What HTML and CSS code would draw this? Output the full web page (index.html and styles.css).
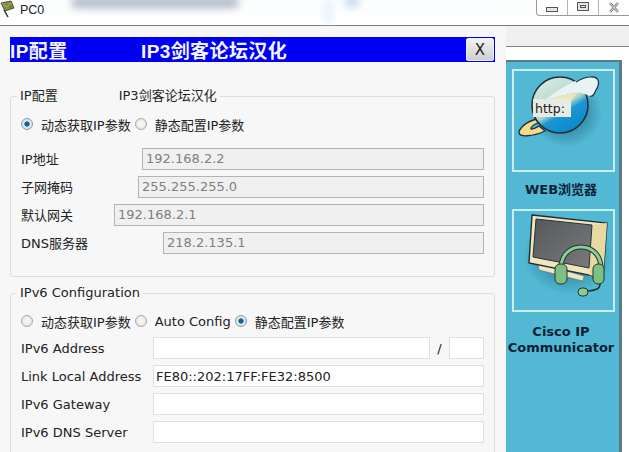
FILE: index.html
```html
<!DOCTYPE html>
<html lang="zh">
<head>
<meta charset="utf-8">
<title>PC0</title>
<link rel="stylesheet" href="styles.css">
</head>
<body>
<div class="window">
  <header class="titlebar">
    <svg class="app-icon" width="16" height="19" viewBox="0 0 16 19">
      <path d="M1 3l10-2 3 7-9 3z" fill="#7d8f4a" stroke="#4d5a2a"/>
      <path d="M2 3l5 4 6-5" fill="none" stroke="#c9a06a"/>
      <path d="M4 10l4 7" stroke="#333" stroke-width="1.5"/>
      <path d="M9 5l3 1-1 2z" fill="#c33"/>
    </svg>
    <span class="app-title">PC0</span>
    <div class="blur blur-a"></div>
    <div class="blur blur-b"></div>
    <div class="blur blur-c"></div>
    <div class="win-controls">
      <div class="win-btn"><span class="ico-min"></span></div>
      <div class="win-btn"><span class="ico-max"></span></div>
      <div class="win-btn win-close">
        <svg width="12" height="11" viewBox="0 0 12 11"><path d="M2 1l8 9M10 1l-8 9" stroke="#777" stroke-width="2.6" fill="none"/><path d="M2 1l8 9M10 1l-8 9" stroke="#eee" stroke-width="1" fill="none"/></svg>
      </div>
    </div>
  </header>
  <div class="content">
    <main class="config">
      <div class="banner">
        <span class="banner-a">IP配置</span>
        <span class="banner-b">IP3剑客论坛汉化</span>
        <button class="close-btn">X</button>
      </div>
      <fieldset class="group group-v4">
        <legend><span class="legend-a">IP配置</span><span>IP3剑客论坛汉化</span></legend>
        <div class="radios">
          <label class="radio"><input type="radio" name="v4" checked><span>动态获取IP参数</span></label>
          <label class="radio"><input type="radio" name="v4"><span>静态配置IP参数</span></label>
        </div>
        <div class="rows">
          <div class="row"><span class="lbl w-ip">IP地址</span><input class="field off" value="192.168.2.2" disabled></div>
          <div class="row"><span class="lbl w-mask">子网掩码</span><input class="field off" value="255.255.255.0" disabled></div>
          <div class="row"><span class="lbl w-gw">默认网关</span><input class="field off" value="192.168.2.1" disabled></div>
          <div class="row"><span class="lbl w-dns">DNS服务器</span><input class="field off" value="218.2.135.1" disabled></div>
        </div>
      </fieldset>
      <fieldset class="group group-v6">
        <legend>IPv6 Configuration</legend>
        <div class="radios">
          <label class="radio"><input type="radio" name="v6"><span>动态获取IP参数</span></label>
          <label class="radio"><input type="radio" name="v6"><span>Auto Config</span></label>
          <label class="radio"><input type="radio" name="v6" checked><span>静态配置IP参数</span></label>
        </div>
        <div class="rows">
          <div class="row"><span class="lbl w-v6">IPv6 Address</span><input class="field"><span class="slash">/</span><input class="field prefix"></div>
          <div class="row"><span class="lbl w-v6">Link Local Address</span><input class="field" value="FE80::202:17FF:FE32:8500"></div>
          <div class="row"><span class="lbl w-v6">IPv6 Gateway</span><input class="field"></div>
          <div class="row"><span class="lbl w-v6">IPv6 DNS Server</span><input class="field"></div>
        </div>
      </fieldset>
    </main>
    <aside class="side">
      <div class="side-top"></div>
      <div class="apps">
        <div class="app">
          <div class="app-frame">
            <svg width="99" height="99" viewBox="514 71 99 99">
              <defs>
                <radialGradient id="shadow"><stop offset="0.6" stop-color="#2f7f9c" stop-opacity=".6"/><stop offset="1" stop-color="#2f7f9c" stop-opacity="0"/></radialGradient>
                <linearGradient id="ball" x1="0.15" y1="0" x2="0.75" y2="1"><stop offset="0" stop-color="#dfeae6"/><stop offset=".55" stop-color="#a9d8c8"/><stop offset=".66" stop-color="#1a96d4"/><stop offset="1" stop-color="#0d85c9"/></linearGradient>
              </defs>
              <ellipse cx="566" cy="113" rx="36" ry="34" fill="url(#shadow)"/>
              <path d="M537 119C527 121 519 128 519 133C520 137 532 137 545 131L539 126C534 129 530 130 531 128C532 126 535 124 538 123Z" fill="#f6d98c" stroke="#1f2f3a" stroke-width="1.3"/>
              <circle cx="560" cy="105" r="28" fill="url(#ball)" stroke="#1f2f3a" stroke-width="1.6"/>
              <path d="M545 100C558 90 574 79 590 77C600 76 600 84 596 90C594 95 592 97 590 96C584 93 580 92 574 93C562 95 553 98 545 100Z" fill="#eaf3f4"/>
              <path d="M576 82C581 79 586 77 590 77C600 76 600 84 596 90C594 95 592 97 590 96" fill="none" stroke="#1f2f3a" stroke-width="1.2"/>
              <path d="M545 101C555 97 566 94 578 93L571 101C560 104 552 104 545 101Z" fill="#ece5b8"/>
              <rect x="533" y="99" width="38" height="18" fill="#e8ebe4"/>
              <text x="535" y="113" class="http">http:</text>
            </svg>
          </div>
          <div class="app-name">WEB浏览器</div>
        </div>
        <div class="app app-2">
          <div class="app-frame">
            <svg width="99" height="99" viewBox="514 211 99 99">
              <defs>
                <radialGradient id="shadow2"><stop offset="0.6" stop-color="#2f7f9c" stop-opacity=".55"/><stop offset="1" stop-color="#2f7f9c" stop-opacity="0"/></radialGradient>
                <linearGradient id="screen" x1="0" y1="0" x2="1" y2="1"><stop offset="0" stop-color="#55585c"/><stop offset="1" stop-color="#7b7a7a"/></linearGradient>
              </defs>
              <ellipse cx="568" cy="256" rx="45" ry="38" fill="url(#shadow2)"/>
              <path d="M538 263L584 276L583 281L539 270Z" fill="#e9e7c8" stroke="#6d6f58" stroke-width=".6"/>
              <path d="M532 215L607 223L603 278L529 263Z" fill="#f1e6bb" stroke="#1f2f3a" stroke-width="1.4"/>
              <path d="M592 225L607 223L603 278L589 275Z" fill="#e8d9a0"/>
              <path d="M536 219L592 225L589 268L533 257Z" fill="url(#screen)" stroke="#26323a" stroke-width="1"/>
              <path d="M561 268C561 255 570 247 581 247C592 247 601 255 601 268" fill="none" stroke="#1f3a2c" stroke-width="5"/>
              <path d="M561 268C561 255 570 247 581 247C592 247 601 255 601 268" fill="none" stroke="#8ecb96" stroke-width="3"/>
              <rect x="555" y="264" width="12" height="20" rx="5" fill="#7fbf85" stroke="#1f3a2c" stroke-width="1"/>
              <rect x="593" y="264" width="11" height="20" rx="5" fill="#7fbf85" stroke="#1f3a2c" stroke-width="1"/>
              <path d="M600 284C600 289 596 290 588 291" fill="none" stroke="#1f3a2c" stroke-width="1.6"/>
              <rect x="578" y="288" width="10" height="8" rx="4" fill="#8acb90" stroke="#1f3a2c" stroke-width="1"/>
            </svg>
          </div>
          <div class="app-name">Cisco IP<br>Communicator</div>
        </div>
      </div>
    </aside>
  </div>
</div>
</body>
</html>
```
FILE: styles.css
```css
* { box-sizing: border-box; }
html, body { margin: 0; padding: 0; }
body { width: 629px; height: 452px; overflow: hidden; background: #fff; font-family: "DejaVu Sans", "Noto Sans CJK SC", sans-serif; font-size: 13px; color: #222; }
.window { width: 629px; height: 452px; display: flex; flex-direction: column; overflow: hidden; }

.titlebar { position: relative; flex: 0 0 26px; display: flex; align-items: flex-start; background: linear-gradient(#fbfdfe, #fff); border-bottom: 1px solid #7d7d7d; }
.app-title { margin: 3px 0 0 4px; font-family: "Liberation Sans", sans-serif; font-size: 12.5px; color: #222; }
.blur { position: absolute; filter: blur(4px); }
.blur-a { left: 72px; top: -3px; width: 166px; height: 11px; background: #8f9bb0; opacity: .7; }
.blur-b { left: 326px; top: 0; width: 5px; height: 24px; background: #d5ecf8; }
.blur-c { left: 346px; top: -4px; width: 12px; height: 10px; background: #b9cfe4; }
.win-controls { position: absolute; right: 0; top: 0; width: 93px; height: 16px; display: flex; background: #fff; border: 1px solid #9a9a9a; border-top: 0; border-right: 0; border-bottom-left-radius: 4px; }
.win-btn { flex: 1; display: flex; align-items: center; justify-content: center; border-right: 1px solid #b5b5b5; }
.win-close { border-right: 0; }
.ico-min { width: 12px; height: 5px; margin-top: 4px; border: 1px solid #555; background: #e4e4e4; }
.ico-max { width: 12px; height: 9px; margin-top: -3px; border: 1px solid #555; background: #e4e4e4; box-shadow: inset 0 0 0 2px #e4e4e4, inset 0 0 0 3px #555; }

.content { flex: 1; display: flex; min-height: 0; }
.config { flex: 0 0 506px; background: #f7f7f7; padding: 11px 11px 0 10px; display: flex; flex-direction: column; }
.banner { flex: none; height: 25px; background: #0000f2; display: flex; align-items: center; color: #f4f4ff; font-family: "Liberation Sans", "Noto Sans CJK SC", sans-serif; font-weight: 700; font-size: 19px; }
.banner-a { width: 131px; letter-spacing: .4px; }
.banner-b { flex: 1; letter-spacing: .4px; }
.close-btn { width: 28px; height: 23px; margin-right: 1px; padding: 0; border: 1px solid #eef; border-radius: 2px; background: linear-gradient(#f2f2f2, #cfcfcf); color: #222; font-family: "DejaVu Sans", sans-serif; font-size: 15px; }

.group { flex: none; margin: 0; padding: 0 10px; border: 1px solid #dedede; border-radius: 3px; min-width: 0; }
.group legend { padding: 0 3px; margin-left: -4px; line-height: 14px; font-size: 13px; color: #222; }
.group-v4 { margin-top: 27px; height: 188px; }
.group-v6 { margin-top: 9px; height: 200px; }
.legend-a { display: inline-block; margin-right: 61px; }

.radios { display: flex; gap: 4px; height: 14px; margin-top: 14px; align-items: center; }
.radio { display: flex; align-items: center; white-space: nowrap; }
.radio input { appearance: none; width: 12px; height: 12px; margin: 0 8px 0 0; border-radius: 50%; border: 1px solid #a9a9a9; background: radial-gradient(circle, #f4f4f4 0 30%, #dcdcdc 100%); }
.radio input:checked { background: radial-gradient(circle, #1f5f8f 0 32%, #d8e8f0 42% 100%); border-color: #8a9aa5; }

.rows { display: flex; flex-direction: column; gap: 6px; margin-top: 17px; }
.group-v6 .rows { margin-top: 9px; }
.row { display: flex; align-items: center; height: 22px; }
.lbl { flex: none; white-space: nowrap; }
.group-v4 .lbl { padding-bottom: 2px; }
.w-ip { width: 121px; }
.w-mask { width: 117px; }
.w-gw { width: 93px; }
.w-dns { width: 142px; }
.w-v6 { width: 132px; }
.field { flex: 1; min-width: 0; height: 22px; padding: 0 2px; border: 1px solid #e0e0e0; background: #fff; font: 13px "DejaVu Sans", sans-serif; color: #222; }
.field.off { border: 1px solid #b4b4b4; background: #f0f0f0; color: #808080; padding: 0 2px 2px 3px; }
.slash { flex: none; width: 19px; text-align: center; }
.field.prefix { flex: 0 0 35px; }

.side { flex: 1; display: flex; flex-direction: column; min-width: 0; }
.side-top { flex: none; height: 21px; background: #f0f0f0; border-bottom: 1px solid #808080; }
.apps { flex: 1; margin: 13px 7px 0 0; background: #52b8d3; border-top: 2px solid #5a7a88; border-right: 3px solid #5a7a88; padding: 7px 0 0 6px; }
.app-frame { width: 103px; height: 103px; border: 2px solid #c9eef2; }
.app-frame svg { display: block; }
.app-name { width: 110px; margin-left: -6px; padding-top: 10px; text-align: center; font-weight: 700; font-size: 13px; line-height: 16px; color: #0c1f33; white-space: nowrap; }
.app-2 { margin-top: 11px; }
.app-2 .app-name { padding-top: 12px; }
.http { font-family: "DejaVu Sans", sans-serif; font-size: 12.5px; fill: #222; }
```
